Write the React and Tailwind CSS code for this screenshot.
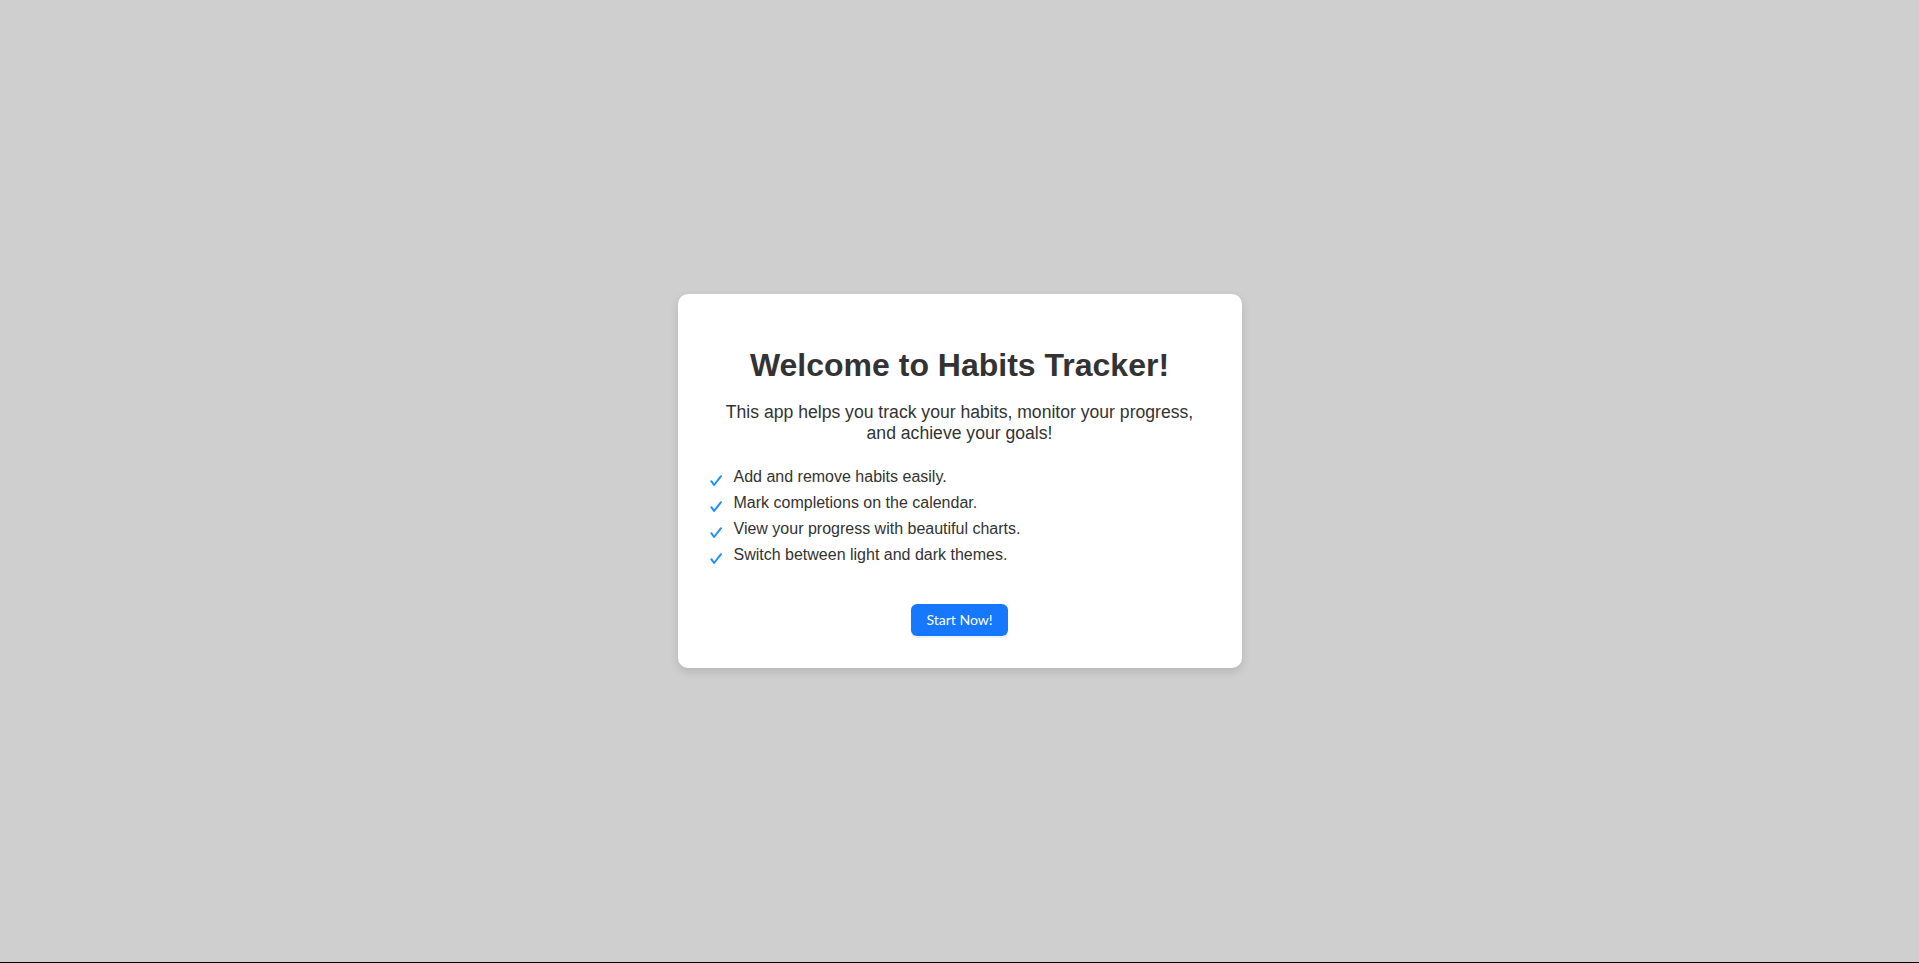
const features = [
  'Add and remove habits easily.',
  'Mark completions on the calendar.',
  'View your progress with beautiful charts.',
  'Switch between light and dark themes.',
];

function Check() {
  return (
    <svg width="12" height="11" viewBox="0 0 12 11" className="mt-[11px] shrink-0" aria-hidden="true">
      <path d="M1.3 6.2 L4.1 10 L11 1.2" fill="none" stroke="#1e90ff" strokeWidth="2" strokeLinecap="round" strokeLinejoin="round" />
    </svg>
  );
}

export default function App() {
  return (
    <div className="h-screen w-full bg-[#cfcfcf] border-b border-black flex items-center justify-center font-['Liberation_Sans',Arial,sans-serif] text-[#333]">
      <div className="w-[564px] bg-white rounded-[10px] p-8 shadow-[0_4px_10px_rgba(0,0,0,0.12)]">
        <h1 className="mt-[21px] mb-[19px] text-center text-[32px] leading-[36px] font-bold">
          Welcome to Habits Tracker!
        </h1>
        <p className="text-center text-[17.6px] leading-[21px]">
          This app helps you track your habits, monitor your progress,
          <br />
          and achieve your goals!
        </p>

        {/* features */}
        <ul className="mt-5 flex flex-col">
          {features.map((f) => (
            <li key={f} className="flex items-start gap-3 text-base leading-[26px]">
              <Check />
              <span>{f}</span>
            </li>
          ))}
        </ul>

        <div className="mt-[36px] flex justify-center">
          <button className="h-8 px-[15px] rounded-md bg-[#1677ff] text-white text-sm font-['Lato',sans-serif] shadow-[0_2px_0_rgba(5,145,255,0.1)]">
            Start Now!
          </button>
        </div>
      </div>
    </div>
  );
}
